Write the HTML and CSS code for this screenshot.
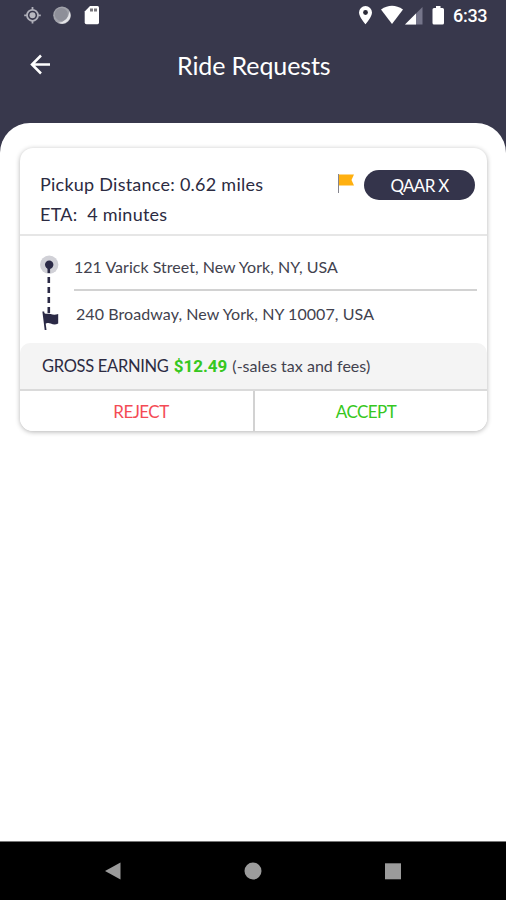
FILE: index.html
```html
<!DOCTYPE html>
<html lang="en">
<head>
    <meta charset="UTF-8">
    <meta name="viewport" content="width=device-width, initial-scale=1.0">
    <title>Ride Requests</title>
    <link rel="stylesheet" href="styles.css">
</head>
<body>
    <div class="screen">
        <div class="status-bar">
            <svg class="status-left" width="110" height="32" viewBox="0 0 110 32">
                <!-- gps -->
                <g fill="none" stroke="#b0b0ba">
                    <circle cx="32.500" cy="15.300" r="5.500" stroke-width="1.800"/>
                    <path d="M32.500 7v3M32.500 20.600v3M24.200 15.300h3M37.800 15.300h3" stroke-width="1.800"/>
                </g>
                <circle cx="32.500" cy="15.300" r="3" fill="#b8b8c0"/>
                <!-- sync -->
                <circle cx="62" cy="15.300" r="8.800" fill="#a1a2aa"/>
                <path d="M69.500 11.500A8.300 8.300 0 0 1 58.500 22.700Q68 21.500 69.500 11.500z" fill="#e4e4e8"/>
                <circle cx="61.300" cy="14.400" r="6.500" fill="#8e8f99"/>
                <!-- sd card -->
                <path d="M90 6h7.500q1.500 0 1.500 1.500v15q0 1.800-1.500 1.800H86.500q-1.800 0-1.800-1.800V11.500z" fill="#fff"/>
                <path d="M90 8.500h3v3h-3zM94 8.500h3v3h-3z" fill="#77757b"/>
            </svg>
            <div class="status-right">
                <svg width="93" height="32" viewBox="355 0 93 32">
                    <path d="M365.500 6a6.500 6.500 0 0 0-6.500 6.500c0 4.500 6.500 11.800 6.500 11.800s6.500-7.300 6.500-11.800a6.500 6.500 0 0 0-6.500-6.500z" fill="#fff"/>
                    <circle cx="365.500" cy="12.500" r="2.400" fill="#292936"/>
                    <path d="M381 9.500Q392 2 403 9.500L392 24z" fill="#fff"/>
                    <path d="M422.500 7v17.500H405z" fill="#75758a"/>
                    <path d="M416 13.500v11h-11z" fill="#fff"/>
                    <path d="M436 6h4.500v2h2q1.500 0 1.500 1.500v13.500q0 1.500-1.500 1.500H434q-1.500 0-1.500-1.500V9.500Q432.500 8 434 8h2z" fill="#fff"/>
                </svg>
                <span class="clock">6:33</span>
            </div>
        </div>

        <header class="app-bar">
            <svg class="back-icon" width="22" height="22" viewBox="0 0 22 22">
                <path d="M21 10.500H3M12 1.500l-9 9 9 9" fill="none" stroke="#fff" stroke-width="2.500"/>
            </svg>
            <h1 class="title">Ride Requests</h1>
        </header>

        <main class="sheet">
            <div class="ride-card">
                <div class="ride-header">
                    <div class="ride-info">
                        <p class="distance">Pickup Distance: 0.62 miles</p>
                        <p class="eta">ETA:&nbsp; 4 minutes</p>
                    </div>
                    <svg class="flag" width="18" height="21" viewBox="0 0 18 21">
                        <path d="M1.500 0v19" stroke="#85858e" stroke-width="1"/>
                        <path d="M2 .5H17l-2.500 5.500 2.500 5.500H2z" fill="#ffb010"/>
                    </svg>
                    <span class="ride-type">QAAR X</span>
                </div>

                <div class="route">
                    <svg class="route-line" width="20" height="77" viewBox="0 0 20 77">
                        <circle cx="9.200" cy="9.700" r="9.200" fill="#d1d1d7"/>
                        <circle cx="9.200" cy="9.700" r="4.200" fill="#2b2a46"/>
                        <path d="M8.800 11v7M8.800 22v6M8.800 32v6M8.800 42v6M8.800 52v6" stroke="#2b2a46" stroke-width="2.600"/>
                        <path d="M3.300 56.500L5.600 75" stroke="#2b2a46" stroke-width="1.800"/>
                        <path d="M3.500 57.500c2.500 2.500 4 .5 7 1.500s4.500 1 7.700 0v9.500c-3 1.500-5 1-7.500 0s-3.500-.5-6 .5z" fill="#2b2a46"/>
                    </svg>
                    <div class="stops">
                        <div class="stop pickup">121 Varick Street, New York, NY, USA</div>
                        <div class="stop dropoff">240 Broadway, New York, NY 10007, USA</div>
                    </div>
                </div>

                <div class="earning">
                    <span class="earning-label">GROSS EARNING</span>
                    <strong class="amount">$12.49</strong>
                    <span class="earning-note">(-sales tax and fees)</span>
                </div>

                <div class="actions">
                    <button class="btn reject">REJECT</button>
                    <button class="btn accept">ACCEPT</button>
                </div>
            </div>
        </main>

        <nav class="nav-bar">
            <svg width="16" height="18" viewBox="0 0 16 18"><path d="M15.500 .5v17L0 9z" fill="#9b9b9b"/></svg>
            <svg width="18" height="18" viewBox="0 0 18 18"><circle cx="9" cy="9" r="8.500" fill="#9b9b9b"/></svg>
            <svg width="16" height="18" viewBox="0 0 16 18"><path d="M0 1.300h16v16H0z" fill="#9b9b9b"/></svg>
        </nav>
    </div>
</body>
</html>
```
FILE: styles.css
```css
* {
    box-sizing: border-box;
    margin: 0;
    padding: 0;
}

body {
    font-family: Lato, sans-serif;
    color: #2c2b42;
}

svg {
    display: block;
    flex-shrink: 0;
}

.screen {
    width: 506px;
    height: 900px;
    display: flex;
    flex-direction: column;
    background: #38384c;
    overflow: hidden;
}

.status-bar {
    height: 32px;
    display: flex;
    justify-content: space-between;
    padding-right: 18px;
}

.status-right {
    display: flex;
}

.clock {
    width: 35px;
    margin-left: 5px;
    font: 500 18px/32px Roboto, sans-serif;
    letter-spacing: -0.3px;
    color: #fff;
    white-space: nowrap;
}

.app-bar {
    height: 91px;
    display: flex;
    align-items: flex-start;
    padding: 15px 0 0 29px;
}

.back-icon {
    margin-top: 7px;
}

.title {
    margin-left: 126px;
    font-size: 25px;
    font-weight: 400;
    line-height: 36px;
    letter-spacing: -0.1px;
    color: #fff;
    white-space: nowrap;
}

.sheet {
    flex: 1;
    padding: 25px 19px 0 20px;
    background: #fff;
    border-radius: 30px 30px 0 0;
}

.ride-card {
    height: 283px;
    background: #fff;
    border-radius: 13px;
    box-shadow: 0 1px 5px rgba(0,0,0,0.3);
    overflow: hidden;
}

.ride-header {
    height: 88px;
    display: flex;
    align-items: flex-start;
    padding: 21px 12px 0 20px;
    border-bottom: 2px solid #e6e6e6;
}

.ride-info {
    width: 297px;
    font-size: 18px;
    line-height: 30px;
    letter-spacing: 0.25px;
    white-space: nowrap;
}

.flag {
    margin-top: 5px;
}

.ride-type {
    width: 111px;
    height: 30px;
    margin: 1px 0 0 9px;
    background: #34344b;
    border-radius: 15px;
    color: #fff;
    font-size: 17px;
    line-height: 31px;
    letter-spacing: -0.7px;
    text-align: center;
    white-space: nowrap;
}

.route {
    height: 107px;
    display: flex;
    padding: 19px 10px 0 20px;
}

.stops {
    flex: 1;
    margin-left: 14px;
    font-size: 16px;
    white-space: nowrap;
}

.stop {
    color: #42424e;
}

.pickup {
    height: 36px;
    line-height: 23px;
    letter-spacing: 0.02px;
    border-bottom: 2px solid #d2d2d2;
}

.dropoff {
    padding-left: 2px;
    line-height: 46px;
    letter-spacing: 0.08px;
}

.earning {
    height: 48px;
    display: flex;
    gap: 5px;
    padding-left: 22px;
    background: #f4f4f4;
    border-bottom: 2px solid #dadada;
    border-radius: 10px 10px 0 0;
    font-size: 16px;
    line-height: 46px;
    white-space: nowrap;
}

.earning-label {
    font-size: 16.5px;
    letter-spacing: -0.3px;
}

.amount {
    font-family: Roboto, sans-serif;
    font-size: 17px;
    color: #36c720;
}

.earning-note {
    color: #42424e;
    letter-spacing: 0.04px;
}

.actions {
    height: 40px;
    display: flex;
}

.btn {
    width: 235px;
    border: none;
    background: #fff;
    font-family: inherit;
    font-size: 17px;
    line-height: 39px;
    letter-spacing: -0.55px;
}

.reject {
    padding-left: 9px;
    border-right: 2px solid #d2d2d2;
    color: #f44b55;
}

.accept {
    flex: 1;
    padding-right: 10px;
    color: #36c720;
}

.nav-bar {
    height: 59px;
    display: flex;
    justify-content: space-between;
    padding: 20px 105px 0 105px;
    background: #000;
    border-top: 1px solid #777;
}
```
